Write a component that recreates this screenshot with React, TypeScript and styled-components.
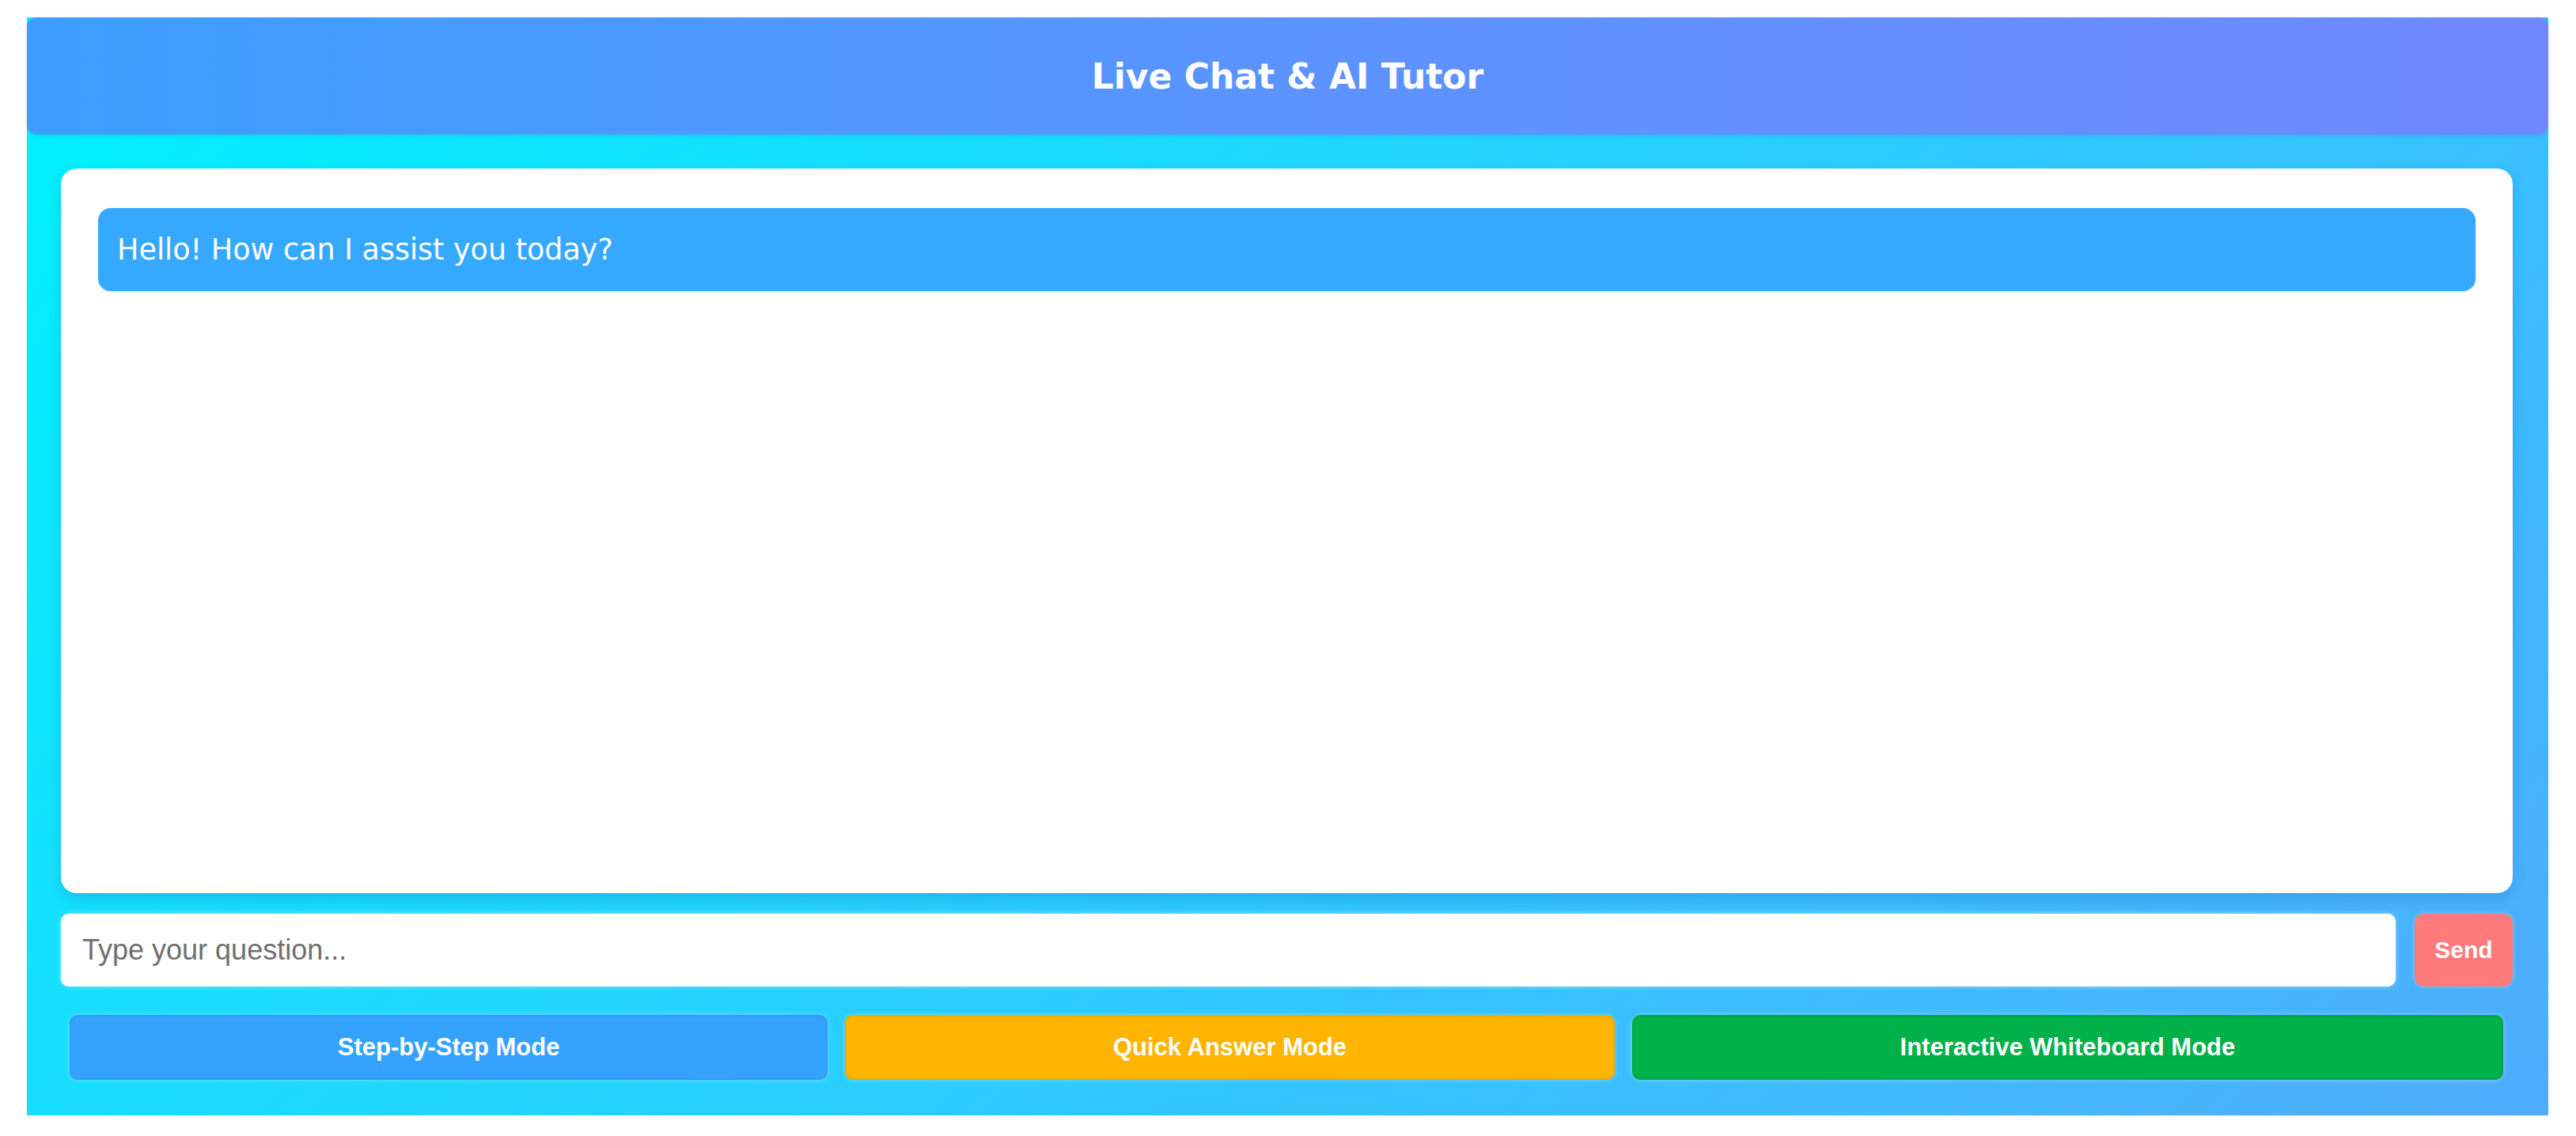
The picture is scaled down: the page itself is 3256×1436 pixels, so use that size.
import React from "react";
import styled, { createGlobalStyle } from "styled-components";

const GlobalStyle = createGlobalStyle`
  html, body {
    margin: 0;
    padding: 0;
    background: #ffffff;
  }
  * {
    box-sizing: border-box;
  }
`;

const Page = styled.div`
  padding: 22px 35px 26px 34px;
`;

const Shell = styled.main`
  height: calc(100vh - 48px);
  display: flex;
  flex-direction: column;
  background: linear-gradient(135deg, #00f2fe 0%, #4facfe 100%);
`;

const Header = styled.header`
  height: 148px;
  flex-shrink: 0;
  display: flex;
  align-items: center;
  justify-content: center;
  border-radius: 12px;
  background: linear-gradient(90deg, #3d9efe 0%, #5b93ff 50%, #7088ff 100%);
  box-shadow: 0 2px 6px rgba(0, 60, 140, 0.12);
`;

const Title = styled.h1`
  margin: 0;
  color: #ffffff;
  font-family: "DejaVu Sans", "Noto Sans", sans-serif;
  font-weight: 700;
  font-size: 44px;
  letter-spacing: 0;
`;

const Body = styled.section`
  flex: 1;
  min-height: 0;
  display: flex;
  flex-direction: column;
  padding: 43px 45px 45px 43px;
`;

const ChatCard = styled.div`
  flex: 1;
  min-height: 0;
  background: #ffffff;
  border-radius: 20px;
  padding: 50px 47px;
  box-shadow: 0 8px 16px rgba(0, 70, 140, 0.18);
  overflow-y: auto;
`;

const Bubble = styled.div`
  background: #35a8ff;
  color: #ffffff;
  border-radius: 16px;
  padding: 30px 24px;
  font-family: "DejaVu Sans", "Noto Sans", sans-serif;
  font-size: 36.5px;
  line-height: 45px;
  box-shadow: 0 1px 3px rgba(0, 80, 160, 0.15);
`;

const Composer = styled.form`
  margin-top: 26px;
  display: flex;
  gap: 24px;
  height: 92px;
  flex-shrink: 0;
`;

const QuestionInput = styled.input`
  flex: 1;
  height: 100%;
  border: 2px solid rgba(255, 255, 255, 0.7);
  border-radius: 10px;
  background: #ffffff;
  padding: 0 25px;
  font-family: "Liberation Sans", Arial, sans-serif;
  font-size: 36px;
  color: #333333;
  outline: none;
  box-shadow: 0 0 6px rgba(255, 255, 255, 0.45);

  &::placeholder {
    color: #6f6f6f;
  }
`;

const SendButton = styled.button`
  width: 124px;
  height: 100%;
  border: none;
  border-radius: 12px;
  background: #ff7a7a;
  color: #ffffff;
  font-family: "Liberation Sans", Arial, sans-serif;
  font-weight: 700;
  font-size: 30px;
  cursor: pointer;
  box-shadow: 0 0 6px rgba(255, 255, 255, 0.3);
`;

const ModeRow = styled.div`
  margin-top: 36px;
  display: flex;
  gap: 22px;
  padding: 0 12px 0 11px;
  flex-shrink: 0;
`;

const ModeButton = styled.button<{ $bg: string }>`
  flex: 1 1 auto;
  height: 82px;
  border: 2px solid rgba(0, 0, 0, 0.06);
  border-radius: 10px;
  background: ${(p) => p.$bg};
  color: #ffffff;
  font-family: "Liberation Sans", Arial, sans-serif;
  font-weight: 700;
  font-size: 31px;
  white-space: nowrap;
  cursor: pointer;
  box-shadow: 0 0 6px rgba(255, 255, 255, 0.35);
`;

const modes = [
  { label: "Step-by-Step Mode", color: "#35a3fe" },
  { label: "Quick Answer Mode", color: "#ffb400" },
  { label: "Interactive Whiteboard Mode", color: "#00b14a" },
];

export default function App() {
  return (
    <>
      <GlobalStyle />
      <Page>
        <Shell>
          <Header>
            <Title>Live Chat &amp; AI Tutor</Title>
          </Header>
          <Body>
            <ChatCard>
              <Bubble>Hello! How can I assist you today?</Bubble>
            </ChatCard>
            <Composer onSubmit={(e) => e.preventDefault()}>
              <QuestionInput type="text" placeholder="Type your question..." />
              <SendButton type="submit">Send</SendButton>
            </Composer>
            <ModeRow>
              {modes.map((m) => (
                <ModeButton key={m.label} type="button" $bg={m.color}>
                  {m.label}
                </ModeButton>
              ))}
            </ModeRow>
          </Body>
        </Shell>
      </Page>
    </>
  );
}
